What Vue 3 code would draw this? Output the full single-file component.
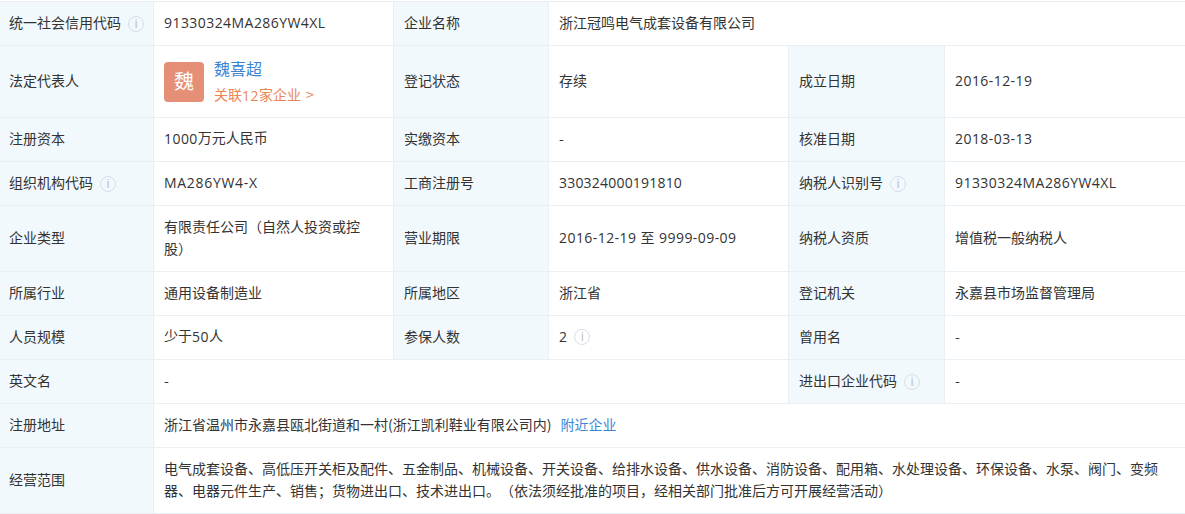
<script setup>
const scope = '电气成套设备、高低压开关柜及配件、五金制品、机械设备、开关设备、给排水设备、供水设备、消防设备、配用箱、水处理设备、环保设备、水泵、阀门、变频器、电器元件生产、销售；货物进出口、技术进出口。（依法须经批准的项目，经相关部门批准后方可开展经营活动）'
</script>

<template>
  <table class="info">
    <colgroup>
      <col class="c1" /><col class="c2" /><col class="c3" /><col class="c4" /><col class="c5" /><col class="c6" />
    </colgroup>
    <tbody>
      <tr class="h44">
        <th>统一社会信用代码<i class="tip">i</i></th>
        <td><span class="num">91330324MA286YW4XL</span></td>
        <th>企业名称</th>
        <td colspan="3">浙江冠鸣电气成套设备有限公司</td>
      </tr>
      <tr class="h72">
        <th>法定代表人</th>
        <td class="pcell">
          <div class="person">
            <span class="avatar">魏</span>
            <div class="pinfo">
              <a class="link name">魏喜超</a>
              <a class="rel">关联<span class="num">12</span>家企业<span class="arrow">&gt;</span></a>
            </div>
          </div>
        </td>
        <th>登记状态</th>
        <td>存续</td>
        <th>成立日期</th>
        <td><span class="num">2016-12-19</span></td>
      </tr>
      <tr class="h44">
        <th>注册资本</th>
        <td><span class="num">1000</span>万元人民币</td>
        <th>实缴资本</th>
        <td>-</td>
        <th>核准日期</th>
        <td><span class="num">2018-03-13</span></td>
      </tr>
      <tr class="h44">
        <th>组织机构代码<i class="tip">i</i></th>
        <td><span class="wide">MA286YW4-X</span></td>
        <th>工商注册号</th>
        <td><span class="digits">330324000191810</span></td>
        <th>纳税人识别号<i class="tip">i</i></th>
        <td><span class="num">91330324MA286YW4XL</span></td>
      </tr>
      <tr class="h66">
        <th>企业类型</th>
        <td>有限责任公司（自然人投资或控股）</td>
        <th>营业期限</th>
        <td><span class="num">2016-12-19 至 9999-09-09</span></td>
        <th>纳税人资质</th>
        <td>增值税一般纳税人</td>
      </tr>
      <tr class="h44">
        <th>所属行业</th>
        <td>通用设备制造业</td>
        <th>所属地区</th>
        <td>浙江省</td>
        <th>登记机关</th>
        <td>永嘉县市场监督管理局</td>
      </tr>
      <tr class="h44">
        <th>人员规模</th>
        <td>少于<span class="num">50</span>人</td>
        <th>参保人数</th>
        <td><span class="num">2</span><i class="tip">i</i></td>
        <th>曾用名</th>
        <td>-</td>
      </tr>
      <tr class="h44">
        <th>英文名</th>
        <td colspan="3">-</td>
        <th>进出口企业代码<i class="tip">i</i></th>
        <td>-</td>
      </tr>
      <tr class="h44">
        <th>注册地址</th>
        <td colspan="5">浙江省温州市永嘉县瓯北街道和一村(浙江凯利鞋业有限公司内)<a class="link near">附近企业</a></td>
      </tr>
      <tr class="h66">
        <th>经营范围</th>
        <td colspan="5">{{ scope }}</td>
      </tr>
    </tbody>
  </table>
</template>

<style>
html, body { margin: 0; background: #fff; }
</style>

<style scoped>
.info {
  width: 1187px;
  margin: 1px 0 0 -1px;
  border-collapse: collapse;
  table-layout: fixed;
  font-family: "Noto Sans CJK SC", "Open Sans", sans-serif;
  font-size: 14px;
  line-height: 22px;
  color: #333;
  text-spacing-trim: space-all;
}
.c1 { width: 154px; }
.c2 { width: 240px; }
.c3 { width: 155px; }
.c4 { width: 240px; }
.c5 { width: 156px; }
.c6 { width: 242px; }
th, td {
  border: 1px solid #e9eff3;
  padding: 0 10px 4px;
  box-sizing: border-box;
  vertical-align: middle;
  text-align: left;
  font-weight: 400;
}
th { background: #f2f9fc; white-space: nowrap; }
th:first-child { padding-left: 9px; }
td.pcell { padding-bottom: 0; }
.h44 { height: 44px; }
.h66 { height: 66px; }
.h72 { height: 72px; }
.num, .wide, .digits {
  font-family: "Open Sans", "Noto Sans CJK SC", sans-serif;
  vertical-align: -1px;
}
.num { letter-spacing: 0.44px; }
.wide { letter-spacing: 0.7px; }
.digits { letter-spacing: 0.2px; }
.tip {
  display: inline-block;
  box-sizing: border-box;
  width: 16px;
  height: 16px;
  margin-left: 7px;
  border: 1px solid #d9dee1;
  border-radius: 50%;
  color: #b9bfc3;
  font: 400 12px/14px "Liberation Sans", sans-serif;
  text-align: center;
  vertical-align: 0;
}
.person { display: flex; gap: 10px; align-items: center; }
.avatar {
  width: 40px;
  height: 40px;
  border-radius: 4px;
  background: #e59076;
  color: #fff;
  font-size: 20px;
  line-height: 38px;
  text-align: center;
  flex: none;
}
.pinfo { display: flex; flex-direction: column; }
.link { color: #3b86d4; }
.name { font-size: 16px; line-height: 24px; }
.rel { color: #ec8556; line-height: 22px; margin-top: 3px; }
.arrow { margin-left: 5px; }
.near { margin-left: 9px; }
</style>
